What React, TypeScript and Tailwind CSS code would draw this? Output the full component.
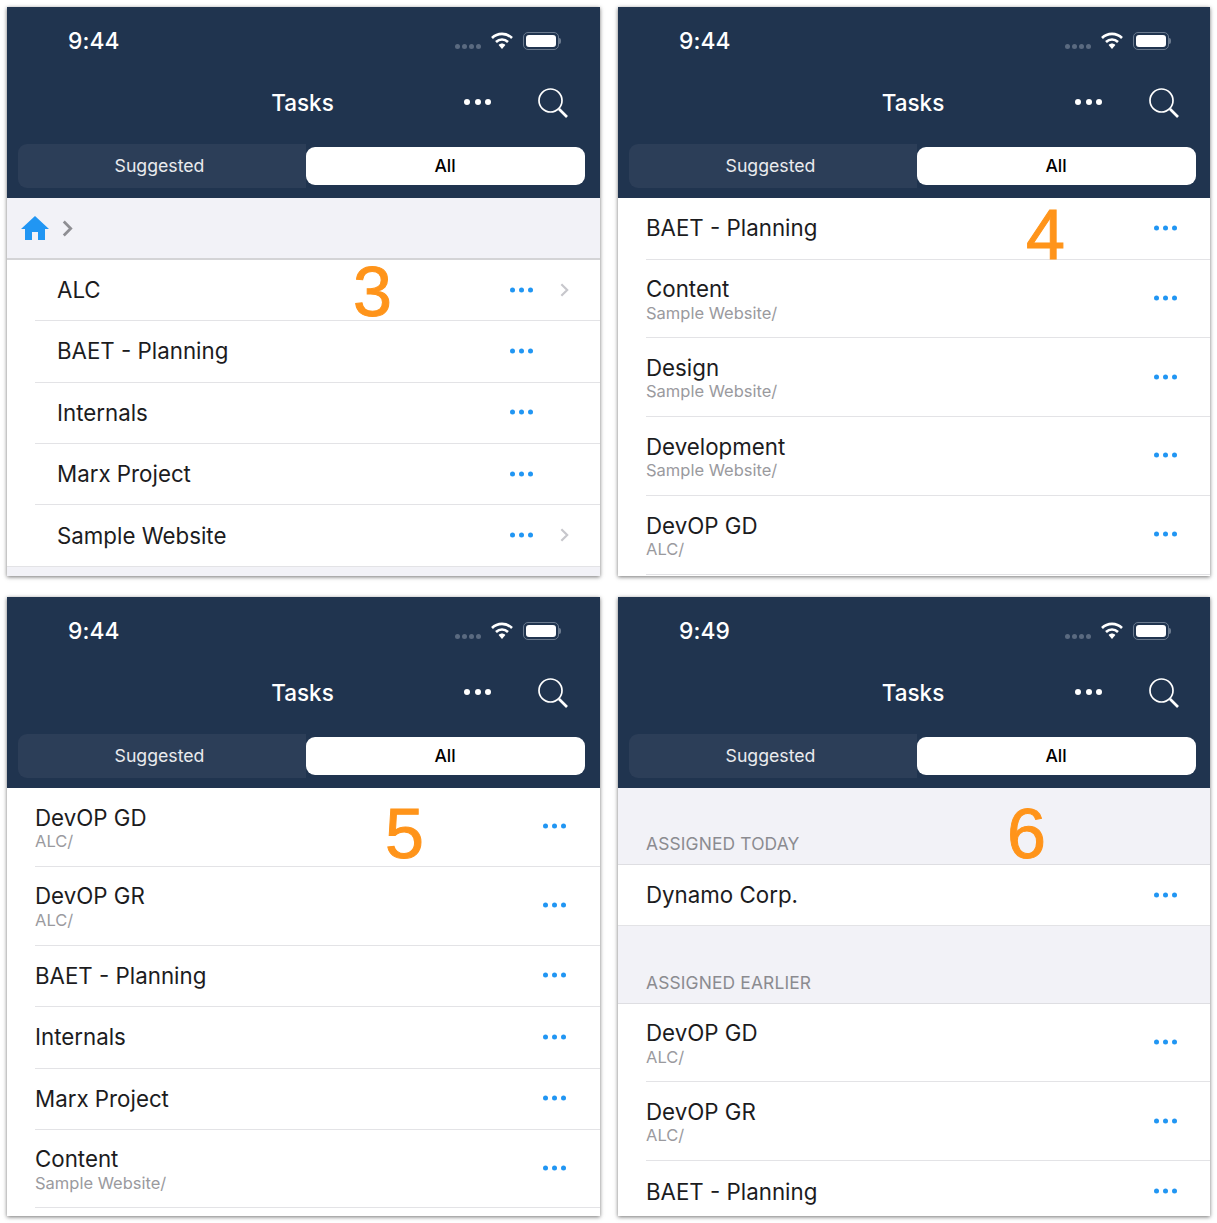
import React from "react";

const font = { fontFamily: "Inter, 'Liberation Sans', sans-serif" };

function Dots({ cls, gap }: { cls: string; gap: string }) {
  return (
    <div className={`flex items-center ${gap}`}>
      <span className={`rounded-full ${cls}`} />
      <span className={`rounded-full ${cls}`} />
      <span className={`rounded-full ${cls}`} />
    </div>
  );
}

function Chevron({ color, w = 10, h = 16, sw = 2 }: { color: string; w?: number; h?: number; sw?: number }) {
  return (
    <svg width={w} height={h} viewBox="0 0 10 16" fill="none">
      <path d="M1.5 1.5 L8 8 L1.5 14.5" stroke={color} strokeWidth={sw} />
    </svg>
  );
}

function Header({ time }: { time: string }) {
  return (
    <div className="bg-[#20344f] h-[191px] shrink-0 flex flex-col">
      <div className="h-[68px] flex items-center justify-between pl-[61px] pr-[39px]">
        <span className="text-white text-[22.8px] font-medium leading-none tracking-[0.1px]">{time}</span>
        <div className="flex items-center">
          <div className="flex gap-[2px] mt-[11px] mr-[10px]">
            {[0, 1, 2, 3].map((i) => (
              <span key={i} className="w-[5px] h-[5px] rounded-full bg-[#5a6a80]" />
            ))}
          </div>
          <svg width="22" height="18" viewBox="0 0 22 18" className="mr-[10px] -mt-[1px]">
            <path d="M1 6 C6.5 0.5 15.5 0.5 21 6" fill="none" stroke="white" strokeWidth="2.6" />
            <path d="M5 10 C8.5 6.6 13.5 6.6 17 10" fill="none" stroke="white" strokeWidth="2.6" />
            <path d="M7.6 13 C9.6 11 12.4 11 14.4 13 L11 17 Z" fill="white" />
          </svg>
          <div className="w-[36px] h-[18px] rounded-[5px] border border-[#6b7a8e] p-[2px] -mt-[1px]">
            <div className="w-full h-full rounded-[3px] bg-white" />
          </div>
          <span className="w-[2px] h-[6px] bg-[#6b7a8e] rounded-r-sm -mt-[1px]" />
        </div>
      </div>
      <div className="h-[69px] flex items-center relative pb-[12px] pr-[2px]">
        <span className="flex-1 text-center text-white text-[22.5px] font-medium leading-none">Tasks</span>
        <div className="absolute left-[457px] top-[24px]">
          <Dots cls="w-[6px] h-[6px] bg-white" gap="gap-[4.5px]" />
        </div>
        <svg width="32" height="32" viewBox="0 0 32 32" className="absolute left-[530px] top-[12px]" fill="none" stroke="white">
          <circle cx="13.5" cy="13.5" r="11.5" strokeWidth="1.7" />
          <path d="M22 22 L30 30" strokeWidth="2.6" />
        </svg>
      </div>
      <div className="ml-[11px] h-[44px] flex items-center">
        <div className="w-[288px] h-full bg-[#2c3e58] rounded-l-[9px] flex items-center justify-center pr-[5px] text-white/90 text-[17.7px] leading-none">
          Suggested
        </div>
        <div className="w-[279px] h-[38px] bg-white rounded-[9px] flex items-center justify-center pr-[1px] text-black text-[17.5px] font-medium leading-none">
          All
        </div>
      </div>
    </div>
  );
}

type R = { t: string; s?: string; c?: boolean };

function Row({ r, sep, pad, h, dotsRight, noLine }: { r: R; sep: number; pad: number; h: number; dotsRight: number; noLine?: boolean }) {
  return (
    <div className="relative shrink-0 bg-white" style={{ height: h, paddingLeft: sep }}>
      <div
        className={`h-full flex items-center ${noLine ? "" : "border-b border-[#e3e3e6]"}`}
        style={{ paddingLeft: pad }}
      >
        <div className="flex-1 flex flex-col justify-center">
          <div className="text-[22.3px] leading-[28px] text-[#1c1c1e]">{r.t}</div>
          {r.s && <div className="text-[16.5px] leading-[18px] text-[#9a9a9e] mt-[0.5px]">{r.s}</div>}
        </div>
      </div>
      <div className="absolute top-1/2 -translate-y-1/2 -mt-[1px]" style={{ right: dotsRight }}>
        <Dots cls="w-[5px] h-[5px] bg-[#2196f3]" gap="gap-[4px]" />
      </div>
      {r.c && (
        <div className="absolute right-[31px] top-1/2 -translate-y-1/2 flex -mt-[1px]">
          <Chevron color="#c7c7cc" w={9} h={15} sw={2.4} />
        </div>
      )}
    </div>
  );
}

function Phone({ h, time, num, numX, numY, children }: { h: number; time: string; num: string; numX: number; numY: number; children: React.ReactNode }) {
  return (
    <div
      className="relative overflow-hidden bg-white flex flex-col shadow-[0_1px_4px_rgba(0,0,0,0.55)]"
      style={{ height: h }}
    >
      <Header time={time} />
      {children}
      <div
        className="absolute text-[#ff941a] text-[70px] leading-none [-webkit-text-stroke:1px_#ff941a]"
        style={{ left: numX, top: numY, fontFamily: "'Liberation Sans', sans-serif" }}
      >
        {num}
      </div>
    </div>
  );
}

function Section({ label, h, pb }: { label: string; h: number; pb: number }) {
  return (
    <div
      className="bg-[#f2f2f7] shrink-0 flex items-end pl-[28px] border-b border-[#dedee2] text-[17.4px] leading-none text-[#8b8b90] tracking-[0.15px]"
      style={{ height: h, paddingBottom: pb }}
    >
      {label}
    </div>
  );
}

export default function App() {
  return (
    <div className="w-[1217px] h-[1223px] bg-white grid grid-cols-[593px_592px] grid-rows-[569px_619px] gap-x-[18px] gap-y-[21px] pl-[7px] pt-[7px]" style={font}>
      <Phone h={569} time="9:44" num="3" numX={346} numY={250}>
        <div className="h-[62px] shrink-0 bg-[#f2f2f7] border-b-2 border-[#d4d4d6] flex items-center pl-[14px]">
          <svg width="28" height="24" viewBox="0 0 28 24" className="mr-[13px]">
            <path d="M14 0 L28 13 H24 V24 H17 V16 H11 V24 H4 V13 H0 Z" fill="#2196f3" />
          </svg>
          <Chevron color="#8e8e93" w={11} h={17} sw={2.6} />
        </div>
        {[
          { t: "ALC", c: true },
          { t: "BAET - Planning" },
          { t: "Internals" },
          { t: "Marx Project" },
          { t: "Sample Website", c: true },
        ].map((r, i) => (
          <Row key={i} r={r} sep={i === 4 ? 0 : 28} pad={i === 4 ? 50 : 22} h={i === 4 ? 62 : 61.3} dotsRight={67} />
        ))}
        <div className="flex-1 bg-[#f2f2f7]" />
      </Phone>

      <Phone h={569} time="9:44" num="4" numX={408} numY={193}>
        {[
          { t: "BAET - Planning", h: 61.5 },
          { t: "Content", s: "Sample Website/", h: 78.5 },
          { t: "Design", s: "Sample Website/", h: 79 },
          { t: "Development", s: "Sample Website/", h: 78.5 },
          { t: "DevOP GD", s: "ALC/", h: 79.5 },
        ].map((r, i) => (
          <Row key={i} r={r} sep={28} pad={0} h={r.h} dotsRight={33} />
        ))}
      </Phone>

      <Phone h={619} time="9:44" num="5" numX={378} numY={202}>
        {[
          { t: "DevOP GD", s: "ALC/", h: 78.5 },
          { t: "DevOP GR", s: "ALC/", h: 79 },
          { t: "BAET - Planning", h: 61.5 },
          { t: "Internals", h: 61.5 },
          { t: "Marx Project", h: 61 },
          { t: "Content", s: "Sample Website/", h: 78.5 },
        ].map((r, i) => (
          <Row key={i} r={r} sep={28} pad={0} h={r.h} dotsRight={34} />
        ))}
      </Phone>

      <Phone h={619} time="9:49" num="6" numX={389} numY={202}>
        <Section label="ASSIGNED TODAY" h={77} pb={12} />
        <Row r={{ t: "Dynamo Corp." }} sep={0} pad={28} h={61} dotsRight={33} />
        <Section label="ASSIGNED EARLIER" h={77.5} pb={11} />
        <Row r={{ t: "DevOP GD", s: "ALC/" }} sep={28} pad={0} h={78.5} dotsRight={33} />
        <Row r={{ t: "DevOP GR", s: "ALC/" }} sep={28} pad={0} h={79} dotsRight={33} />
        <Row r={{ t: "BAET - Planning" }} sep={28} pad={0} h={61} dotsRight={33} noLine />
      </Phone>
    </div>
  );
}
